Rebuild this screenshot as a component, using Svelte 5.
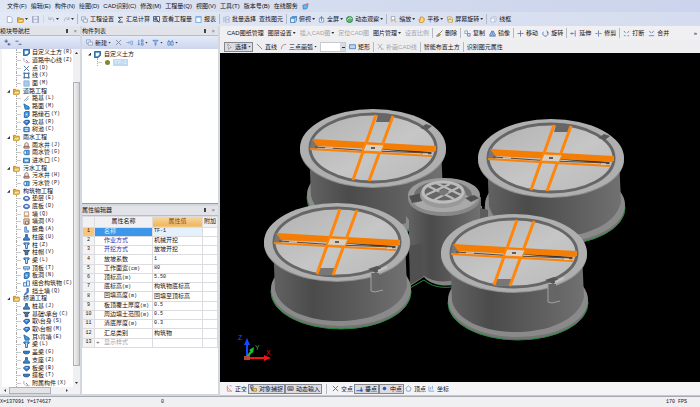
<!--
  Ventana principal del modelador: menús, barras de herramientas,
  árbol de módulos, editor de propiedades y vista 3D.
-->
<script>
  const menus = ['文件(F)', '编辑(E)', '构件(N)', '绘图(D)', 'CAD识别(C)', '修改(M)', '工程量(Q)', '视图(V)', '工具(T)', '版本号(B)', '在线服务'];

  const sep = { sep: true };

  const principal = [
    { icon: 'sheet', t: '工程设置' },
    { icon: 'sigma', t: '汇总计算' },
    { icon: 'view', t: '查看工程量' },
    { icon: 'report', t: '报表' },
    sep,
    { icon: 'batch', t: '批量选择' },
    { t: '查找图元' },
    sep,
    { icon: 'cube', t: '俯视', drop: true },
    { icon: 'full', t: '全屏', drop: true },
    { icon: 'orbit', t: '动态观察', drop: true },
    sep,
    { icon: 'zoom', t: '缩放', drop: true },
    { icon: 'hand', t: '平移', drop: true },
    { icon: 'spin', t: '屏幕旋转', drop: true },
    sep,
    { icon: 'wire', t: '线框' },
  ];

  const edicion = [
    { t: 'CAD图纸管理' },
    { t: '图层设置', drop: true },
    { t: '插入CAD图', drop: true, off: true },
    { t: '定位CAD图', off: true },
    { t: '图片管理', drop: true },
    { t: '设置比例', off: true },
    sep,
    { icon: 'brush', t: '删除' },
    sep,
    { icon: 'copy', t: '复制' },
    { icon: 'mirror', t: '镜像' },
    sep,
    { icon: 'move', t: '移动' },
    { icon: 'rotate', t: '旋转' },
    sep,
    { icon: 'extend', t: '延伸' },
    { icon: 'trim', t: '修剪' },
    sep,
    { icon: 'cut', t: '打断' },
    { icon: 'merge', t: '合并' },
  ];

  const dibujo = [
    { icon: 'pointer', t: '选择', drop: true, on: true },
    { icon: 'line', t: '直线' },
    { icon: 'arc', t: '三点画弧', drop: true },
  ];

  const dibujo2 = [
    { icon: 'rect', t: '矩形' },
    sep,
    { icon: 'patch', t: '补画CAD线', off: true },
    sep,
    { t: '智能布置土方' },
    sep,
    { t: '识别图元属性' },
  ];

  const captura = [
    { icon: 'ortho', t: '正交' },
    { icon: 'snap', t: '对象捕捉', on: true },
    { icon: 'keys', t: '动态输入', on: true },
    sep,
    { icon: 'cross', t: '交点' },
    { icon: 'perp', t: '垂点', on: true },
    { icon: 'dot', t: '中点', on: true },
    { icon: 'vertex', t: '顶点' },
    { icon: 'coord', t: '坐标' },
  ];

  const arbol = [
    ['earth', '自定义土方', 'R'],
    ['route', '道路中心线', 'Z'],
    ['cross', '点', 'D'],
    ['nodes', '线', 'X'],
    ['area', '面', 'M'],
    ['folder', '道路工程'],
    ['road', '路基', 'L'],
    ['wedge', '路面', 'M'],
    ['curb', '路缘石', 'Y'],
    ['gem', '软基', 'R'],
    ['pool', '树池', 'C'],
    ['folder', '雨水工程'],
    ['well', '雨水井', 'J'],
    ['pipe', '雨水管', 'G'],
    ['inlet', '进水口', 'C'],
    ['folder', '污水工程'],
    ['well', '污水井', 'H'],
    ['pipe', '污水管', 'P'],
    ['folder', '构筑物工程'],
    ['disc', '垫层', 'E'],
    ['disc', '底板', 'D'],
    ['wall', '墙', 'Q'],
    ['hole', '墙洞', 'K'],
    ['angle', '腋角', 'A'],
    ['seat', '柱座', 'U'],
    ['column', '柱', 'Z'],
    ['cap', '柱帽', 'V'],
    ['column', '梁', 'L'],
    ['slab', '顶板', 'T'],
    ['curb', '板洞', 'N'],
    ['group', '组合构筑物', 'C'],
    ['retain', '挡土墙', 'Q'],
    ['folder', '桥涵工程'],
    ['seat', '桩基', 'J'],
    ['cap', '基础\\承台', 'C'],
    ['gem', '取\\台身', 'S'],
    ['gem', '取\\台帽', 'M'],
    ['wedge', '耳\\背墙', 'E'],
    ['column', '梁', 'L'],
    ['beam', '盖梁', 'G'],
    ['seat', '支座', 'Z'],
    ['gem', '板梁', 'B'],
    ['beam', '搭板', 'T'],
    ['route', '附属构件', 'X'],
  ];

  const propiedades = [
    ['名称', '', 'TF-1'],
    ['作业方式', '', '机械开挖'],
    ['开挖方式', '', '放坡开挖'],
    ['放坡系数', '', '1'],
    ['工作面宽', '(cm)', '80'],
    ['顶标高', '(m)', '5.50'],
    ['底标高', '(m)', '构筑物底标高'],
    ['回填高度', '(m)', '回填至顶标高'],
    ['板顶覆土厚度', '(m)', '0.5'],
    ['周边填土范围', '(m)', '0.5'],
    ['清底厚度', '(m)', '0.3'],
    ['汇总类别', '', '构筑物'],
    ['显示样式', '', ''],
  ];

  // cada icono: lista de [trazado, relleno, contorno] en una caja de 16
  const iconos = {
    new: [['M3 1h7l4 4v10H3z', '#fff', '#a5b1c6']],
    open: [['M1 4h5l2 2h6v8H1z', '#f0b93a', '#c08a20'], ['M4 8h12l-3 6H1z', '#ffe08a', '#c99830']],
    save: [['M1 1h14v14H1z', '#b9c3d8', '#98a4bf'], ['M4 1h8v5H4zM4 9h8v6H4z', '#e8ecf5', 'none']],
    undo: [['M3 7c4-5 11-3 10 5M2 2v6h6', 'none', '#a9b4c8']],
    redo: [['M13 7C9 2 2 4 3 12M14 2v6H8', 'none', '#a9b4c8']],
    sheet: [['M1 2h9v8H1z', '#eaf2ff', '#86a5cf'], ['M5 7h10v7H5z', '#fff8d8', '#8c9fc0']],
    sigma: [['M13 3H3l5 5-5 6h10', 'none', '#333']],
    view: [['M1 1h14v11H1z', '#fff', '#444f68'], ['M4 4h5v5H4z', '#6a9be0', '#33507c'], ['M9 9l5 6', 'none', '#333']],
    report: [['M2 1h12v14H2z', '#f5faff', '#6ea0d8'], ['M2 1h12v3H2z', '#7ab5ee', 'none']],
    batch: [['M2 2v12M6 2h8v5H6zM6 9h8v5H6z', '#fff', '#9db0cc']],
    cube: [['M1 5l4-4h10v10l-4 4H1z', '#d9ecff', '#427fb8'], ['M1 5h10v10M11 5l4-4', 'none', '#427fb8'], ['M1 5l4-4h10l-4 4z', '#4f96cf', 'none']],
    full: [['M3 5h10v9H3z', '#eaf3ff', '#7b9cc8'], ['M8 1v10M5 4l3-3 3 3', 'none', '#5583bd']],
    orbit: [['M8 1a7 7 0 100 14A7 7 0 008 1', '#5cb56e', '#2e7e4a'], ['M2 10c5-8 9-6 12-3', 'none', '#d8ffe0']],
    zoom: [['M3 1h8v8H3z', '#fff', '#8ea5c8'], ['M10 9l4 6M6 9l-3 5', 'none', '#d79b3e']],
    hand: [['M4 15L2 8l3 1V3l3-1 3 1 3 2v6l-3 4z', '#ffd37c', '#c78d2b']],
    spin: [['M3 2h9l3 4v8H5z', '#fff0ba', '#c2a050'], ['M5 10c2-5 7-4 7 0', 'none', '#3b74b8']],
    wire: [['M2 5l3-3h9v9l-3 3H2zM2 5h9v9', '#f4f7fc', '#b0bfd6']],
    brush: [['M15 1L7 9', 'none', '#777'], ['M8 8c-3 0-4 3-7 6 5 1 8-1 9-4z', '#c6a46c', '#8b7a55']],
    copy: [['M2 2h6v6H2z', '#fff', '#7e9bc4'], ['M8 8h6v6H8z', '#d7e7ff', '#5f88c0']],
    mirror: [['M7 2v10H1zM9 2v10h6z', '#cfe2fb', '#4b7dbb'], ['M1 14h14', 'none', '#4b7dbb']],
    move: [['M8 1v14M1 8h14', 'none', '#6d7a92']],
    rotate: [['M3 4c-3 6 1 10 5 10s8-5 5-10M10 2l3 2-1 4', 'none', '#3d74c8']],
    extend: [['M1 8h9M12 1v14M5 5l-3 3 3 3', 'none', '#6381b4']],
    trim: [['M1 8h5M10 8h5M8 1v14', 'none', '#6381b4']],
    cut: [['M2 2l4 5M14 2l-4 5M2 13h4M10 13h4', 'none', '#6381b4']],
    merge: [['M3 2l4 5M13 2L9 7M2 13h12', 'none', '#6381b4']],
    pointer: [['M4 2l8 8-4 1-2 4z', '#fff', '#999']],
    line: [['M2 2l12 12', 'none', '#6a7f9e']],
    arc: [['M3 14C3 7 7 3 14 3', 'none', '#c07878']],
    rect: [['M1 4h14v9H1z', '#b9d7f7', '#4a7fc1']],
    patch: [['M2 2l10 12M12 2L3 13M9 14h6', 'none', '#aaa']],
    ortho: [['M3 1v13h11M3 5l9 9M8 2h5', 'none', '#d08b8b']],
    snap: [['M1 1h6v6H1z', 'none', '#5a6f94'], ['M6 8h9v6H6z', '#f2cb55', '#b08a2e'], ['M4 4v8h4', 'none', '#445']],
    keys: [['M2 4h12v8H2z', '#e8e8e8', '#555'], ['M4 7h8M4 10h8', 'none', '#555']],
    cross: [['M2 2l12 12M14 2L2 14', 'none', '#3f6ba5']],
    perp: [['M1 13h14M12 5v8', 'none', '#28509c'], ['M10 10h5v5h-5z', '#2b5ec2', 'none']],
    dot: [['M8 5a3 3 0 100 6 3 3 0 000-6', '#1f4cae', '#1f4cae']],
    vertex: [['M8 2l6 5-2 7H4L2 7z', 'none', '#7aa0cc']],
    coord: [['M2 3v11h12M6 10V5M10 10V2', 'none', '#7aa0cc']],
    earth: [['M1 1h14v9l-6 5H1z', '#3d86c0', '#215c8e'], ['M4 4h8v5l-4 3H4z', '#f4fbff', 'none']],
    route: [['M2 2v6l5 5h8', 'none', '#d08aa6'], ['M7 7l4 4', 'none', '#4d6fae']],
    nodes: [['M3 3h10v10H3z', 'none', '#30547e'], ['M1 1h4v4H1zM11 1h4v4h-4zM1 11h4v4H1zM11 11h4v4h-4z', '#3b77a8', 'none']],
    area: [['M2 2h12v12H2z', '#a9c9ee', '#88aeda']],
    road: [['M2 14L13 2M6 14l7-6', 'none', '#8a8f98']],
    wedge: [['M2 2l12 7v5H5z', '#3e97e0', '#2566a8']],
    curb: [['M3 3l4-2h7v10l-4 4H3z', '#3e9be6', '#1e5fa8'], ['M6 6h4v4H6z', '#c8e7ff', 'none']],
    gem: [['M1 7l4-4h9l1 5-7 6z', '#3a7fd0', '#1e4f97'], ['M4 7l3-2h5l-3 3z', '#b5dcff', 'none']],
    pool: [['M2 3h12v10H2z', '#5aa3e2', '#1f5a9c'], ['M4 6h8M4 10h8', 'none', '#e6f5ff']],
    well: [['M4 6c0-6 8-6 8 0v4H4z', '#f2e4df', '#9a6a60'], ['M2 10h12v4H2z', '#d6b6ac', '#8e6258']],
    pipe: [['M5 3h9v10H5z', '#5cb0ee', '#2a6daf'], ['M5 3a3 5 0 100 10 3 5 0 000-10', '#e6f6ff', '#2a6daf']],
    inlet: [['M1 3h14v10H1z', '#4fa5dc', '#276a9c'], ['M4 6h8v4H4z', '#d7f1ff', 'none']],
    disc: [['M8 3c-9 0-9 10 0 10s9-10 0-10', '#5e8fdc', '#2a4f9a'], ['M8 5c-5 0-5 4 0 4s5-4 0-4', '#e4f0ff', 'none']],
    wall: [['M3 2h10v9H3z', '#fdf3e8', '#b98c6a'], ['M2 13h12', 'none', '#b98c6a']],
    hole: [['M2 2h12v12H2z', '#f3ddc9', '#996c48'], ['M6 7h6v7H6z', '#fff', '#76543a']],
    angle: [['M4 2h4v7l5 2v3H4z', '#a6cdf5', '#4f82bd']],
    seat: [['M6 1h4v6l5 4v3H1v-3l5-4z', '#3f86c6', '#23588f']],
    column: [['M2 2h12v3l-4 2v8H6V7L2 5z', '#57a2e4', '#28629f'], ['M7 4h2v9H7z', '#d4edff', 'none']],
    cap: [['M1 3h14l-4 5v5H5V8z', '#59748e', '#304d69']],
    slab: [['M1 4h14v5H1z', '#b6d6f7', '#4676b0'], ['M5 9v4M11 9v4', 'none', '#4676b0']],
    group: [['M1 6h7v8H1zM8 2h7v12H8z', '#d9ebff', '#4b7ebd']],
    retain: [['M9 1h3v9l-6 5H3l6-7z', '#5ea1e6', '#2a62a6']],
    beam: [['M1 5h14v3l-4 3H5L1 9z', '#3b7ac2', '#1d4f8e']],
    folder: [['M1 3h5l2 2h6v9H1z', '#e8b23c', '#b98b28'], ['M4 7h12l-3 7H1z', '#ffe18d', '#c79a38']],
    del: [['M2 2l12 12M14 2L2 14', 'none', '#7b8798']],
    paste: [['M1 8h8M6 5l3 3-3 3M11 5h4v8h-4z', 'none', '#87a8d8']],
    sort: [['M4 2v12M2 11l2 3 2-3M10 2h4v4h-4zM10 9h4v5h-4z', 'none', '#5c87c8']],
    filter: [['M2 3h12L9 8v6H7V8z', '#a9c6ef', '#5c87c8']],
    find: [['M2 6h5v8H2zM9 6h5v8H9zM4 2v4M12 2v4M7 9h2', '#d1e1f8', '#5c87c8']],
    expand: [['M1 5h8M5 1v8M8 12h7M11 9v6', 'none', '#46597e']],
    collapse: [['M1 5h7M8 12h7', 'none', '#46597e']],
    service: [['M2 5l12-3-3 11-8 1z', '#6cb7ec', '#3a88c8'], ['M9 1h5v5H9z', '#ee7768', 'none']],
  };

  // centros de la tapa de cada tanque; front: los dos delanteros
  const traseros = [{ x: 373, y: 148 }, { x: 551, y: 158 }];
  const delanteros = [{ x: 337, y: 242, front: true }, { x: 514, y: 253, front: true }];
</script>

{#snippet icono(name)}
  <svg class="ico" viewBox="0 0 16 16" aria-hidden="true">
    {#each iconos[name] as [d, fill, stroke]}
      <path {d} {fill} {stroke} stroke-width="2" />
    {/each}
  </svg>
{/snippet}

{#snippet botones(items)}
  {#each items as b}
    {#if b.sep}
      <span class="sep"></span>
    {:else}
      <button class="btn" class:on={b.on} disabled={b.off}>
        {#if b.icon}{@render icono(b.icon)}{/if}
        <span>{b.t}</span>
        {#if b.drop}<i class="drop"></i>{/if}
      </button>
    {/if}
  {/each}
{/snippet}

{#snippet cabecera(titulo)}
  <header class="title">
    <h2>{titulo}</h2>
    <button class="mini" aria-label="固定"><i class="pin"></i></button>
    <button class="mini" aria-label="关闭">×</button>
  </header>
{/snippet}

{#snippet tanque(t)}
  <g transform="translate({t.x} {t.y})">
    <ellipse cx="4" cy="50" rx="70" ry="37" fill="#747474" stroke="#1f8a3b" stroke-width="1" />
    <ellipse cx="4" cy="47" rx="70" ry="37" fill="#8a8a8a" />
    <path d="M-64 0L-62 48C-52 90 60 90 70 44L68 0z" fill="url(#cuerpo)" />
    <ellipse cx="0" cy="2" rx="73" ry="38" fill="#8f8f8f" />
    <ellipse cx="0" cy="0" rx="73" ry="39" fill="#afafaf" />
    <ellipse cx="0" cy="0" rx="63" ry="34" fill="url(#tapa)" stroke="#666" stroke-width="3" />
    {#if t.front}
      <path d="M-17 26h15l-3 7h-15z" fill="#777" />
      <path d="M31 27l9-3 5 3-6 4z" fill="#555" />
      <path d="M34 31v18l8 1v-19z" fill="#666" />
      <path d="M34 31v18l4 1 8-2" fill="none" stroke="#a2a2a2" />
      <path d="M41 29l9-4" stroke="#c4c4c4" stroke-width="2" />
    {:else}
      <path d="M5-33h15l-3 7H3z" fill="#666" />
      <path d="M47-20l6-4 6 2-5 4z" fill="#5a5a5a" />
    {/if}
    <path d="M-61-9l-2 9 7 1 3-8z" fill="#777" />
    <path d="M-18-2L58 5" stroke="#333" stroke-width="2" />
    <path d="M-61-9L62-2v6L-56-2z" fill="#f47d05" />
    <path d="M-58-1L0 3 59 5" fill="none" stroke="#5b4a38" stroke-width="1" />
    <path d="M-63 1L59 8M62-2v5" fill="none" stroke="#fa8207" stroke-width="2" />
    <path d="M-48 0h8M50 6h5" stroke="#eee" stroke-width="1" />
    <path d="M3-33l-23 65M20-32L-4 33" stroke="#ff860a" stroke-width="3" />
    <path d="M-7-4L11-3 8 4-10 3z" fill="#d8cfc3" stroke="#fa8207" />
    <path d="M-2-1h4v2h-4z" fill="#665c50" />
  </g>
{/snippet}

<div class="app">
  <nav class="menu">
    {#each menus as m}
      <button class="btn">{m}</button>
    {/each}
    {@render icono('service')}
  </nav>

  <div class="bar main">
    <div class="quick">
      <button class="btn" aria-label="新建">{@render icono('new')}</button>
      <button class="btn" aria-label="打开">{@render icono('open')}<i class="drop"></i></button>
      <button class="btn" aria-label="保存">{@render icono('save')}</button>
      <span class="sep"></span>
      <button class="btn" aria-label="撤销">{@render icono('undo')}<i class="drop"></i></button>
      <button class="btn" aria-label="恢复">{@render icono('redo')}<i class="drop"></i></button>
    </div>
    <span class="sep"></span>
    {@render botones(principal)}
  </div>

  <div class="work">
    <aside class="nav">
      {@render cabecera('模块导航栏')}
      <div class="tools">
        <button class="btn" aria-label="展开">{@render icono('expand')}</button>
        <button class="btn" aria-label="折叠">{@render icono('collapse')}</button>
      </div>
      <div class="scroll">
        <ul class="tree">
          {#each arbol as [icon, name, key]}
            <li class:folder={!key}>
              <i class={key ? 'branch' : 'tri'}></i>
              {@render icono(icon)}
              <span>{name}</span>
              {#if key}<kbd>({key})</kbd>{/if}
            </li>
          {/each}
        </ul>
        <div class="vbar"><i class="up"></i><b></b><i class="drop"></i></div>
      </div>
      <div class="hbar"><i class="left"></i><b></b><i class="right"></i></div>
    </aside>

    <section class="side">
      <div class="list">
        {@render cabecera('构件列表')}
        <div class="tools">
          <button class="btn">{@render icono('sheet')}<span>新建</span><i class="drop"></i></button>
          <button class="btn" aria-label="删除">{@render icono('del')}</button>
          <button class="btn" aria-label="复制">{@render icono('paste')}</button>
          <button class="btn" aria-label="排序">{@render icono('sort')}<i class="drop"></i></button>
          <button class="btn" aria-label="过滤">{@render icono('filter')}<i class="drop"></i></button>
          <button class="btn" aria-label="查找">{@render icono('find')}<i class="drop"></i></button>
        </div>
        <ul class="items">
          <li><i class="tri"></i>{@render icono('earth')}<span>自定义土方</span></li>
          <li class="leaf"><i class="branch"></i><i class="ball"></i><span class="sel">TF-1</span></li>
        </ul>
      </div>

      <div class="props">
        {@render cabecera('属性编辑器')}
        <table>
          <colgroup><col class="c1" /><col class="c2" /><col class="c3" /><col /></colgroup>
          <thead>
            <tr><th></th><th>属性名称</th><th class="hot">属性值</th><th>附加</th></tr>
          </thead>
          <tbody>
            {#each propiedades as [name, unit, value], i}
              <tr class:current={i === 0} class:link={i === 1 || i === 2} class:dim={i === 12}>
                <th>{i + 1}</th>
                <td>{#if i === 12}<i class="plus">+</i>{/if}{name}{#if unit}<kbd>{unit}</kbd>{/if}</td>
                <td class:num={/^[\w.-]+$/.test(value)}>{value}</td>
                <td></td>
              </tr>
            {/each}
          </tbody>
        </table>
      </div>
    </section>

    <main class="stage">
      <div class="bar edit">
        {@render botones(edicion)}
        <button class="btn more" aria-label="更多">»</button>
      </div>
      <div class="bar draw">
        {@render botones(dibujo)}
        <select aria-label="画弧参数"><option></option></select>
        {@render botones(dibujo2)}
      </div>

      <div class="view">
        <svg viewBox="220 53 480 329" role="img" aria-label="三维视图">
          <defs>
            <linearGradient id="cuerpo">
              <stop offset="0" stop-color="#626262" />
              <stop offset=".3" stop-color="#4b4b4b" />
              <stop offset=".65" stop-color="#5d5d5d" />
              <stop offset="1" stop-color="#717171" />
            </linearGradient>
            <linearGradient id="tapa" x1="0" y1="0" x2="1" y2="1">
              <stop offset="0" stop-color="#b2b2b2" />
              <stop offset=".55" stop-color="#c6c6c6" />
              <stop offset="1" stop-color="#b9b9b9" />
            </linearGradient>
          </defs>

          {#each traseros as t}{@render tanque(t)}{/each}

          <!-- pozo central -->
          <path d="M410 286l14-9c10 11 28 10 40 5l18-10v-66h-70v60z" fill="#858585" />
          <path d="M410 288l14-8c10 9 26 9 40 4" fill="none" stroke="#1f8a3b" />
          <path d="M409 197v44l2 42 13-7c12 8 30 8 57-6v-73z" fill="url(#cuerpo)" />
          <path d="M480 208l8 2v18l-8 2z" fill="#5c5c5c" />
          <path d="M409 246l14-3v34l-13 8z" fill="#505050" />
          <path d="M409 228v-8l-3-4v14z" fill="#8a8a8a" />
          <ellipse cx="444" cy="199" rx="36" ry="17" fill="#888" />
          <ellipse cx="444" cy="195" rx="36" ry="17" fill="#9b9b9b" />
          <ellipse cx="443" cy="195" rx="29" ry="14" fill="#707070" />
          <path d="M415 204c8 10 48 12 60-2l-10-8-36 2z" fill="#a9a9a9" />
          <path d="M409 196l13-3v8l-10 2zM465 198l9-3 5 3-8 4z" fill="#505050" />
          <ellipse cx="443" cy="195" rx="23" ry="13" fill="#999" />
          <ellipse cx="443" cy="192" rx="20" ry="10" fill="#666" stroke="#bdbdbd" stroke-width="3" />
          <path d="M428 186l26 13M436 183l25 12M426 195l24-11M434 200l25-13" stroke="#bababa" stroke-width="2" />
          <path d="M438 192l6-3 5 3-6 4z" fill="#777" />

          {#each delanteros as t}{@render tanque(t)}{/each}

          <!-- ejes -->
          <g fill="none" stroke-width="2">
            <path d="M247 357v-14" stroke="#1747ff" />
            <path d="M244 345l3-7 3 7z" fill="#1747ff" />
            <path d="M247 357l5-6" stroke="#12c43a" />
            <path d="M249 350l5-3-1 6z" fill="#12c43a" />
            <path d="M247 358h18" stroke="#f01515" />
            <path d="M264 355l7 3-7 3z" fill="#f01515" />
            <path d="M244 356h6v4h-6z" fill="#b54632" />
          </g>
          <text x="238" y="340" fill="#2551ff">Z</text>
          <text x="255" y="350" fill="#33a852">Y</text>
          <text x="266" y="355" fill="#d81818">X</text>
        </svg>
      </div>

      <div class="bar snapbar">{@render botones(captura)}</div>
    </main>
  </div>

  <footer class="status">
    <span>X=137091 Y=174627</span>
    <span>0</span>
    <span>170 FPS</span>
  </footer>
</div>

<style>
  :global(body) {
    margin: 0;
  }

  .app {
    display: flex;
    flex-direction: column;
    height: 100vh;
    overflow: hidden;
    background: #d3d7df;
    color: #111116;
    font: 6px/8px 'Liberation Sans', 'Noto Sans CJK SC', sans-serif;
    white-space: nowrap;
  }

  button,
  select {
    margin: 0;
    padding: 0;
    border: 0;
    background: none;
    color: inherit;
    font: inherit;
  }

  ul {
    margin: 0;
    padding: 0;
    list-style: none;
  }

  kbd,
  .num {
    font-family: 'Liberation Mono', monospace;
    font-size: 5px;
  }

  .ico {
    flex: none;
    width: 7px;
    height: 7px;
  }

  .btn {
    display: flex;
    flex: none;
    align-items: center;
    gap: 2px;
  }

  .btn:disabled {
    color: #a3a3a8;
  }

  .drop,
  .up {
    flex: none;
    width: 3px;
    height: 2px;
    background: #333;
    clip-path: polygon(0 0, 100% 0, 50% 100%);
  }

  .up {
    clip-path: polygon(50% 0, 100% 100%, 0 100%);
  }

  .btn .drop {
    margin-left: -1px;
  }

  .sep {
    flex: none;
    width: 1px;
    height: 10px;
    background: #b4b9c6;
  }

  .menu {
    display: flex;
    flex: none;
    align-items: center;
    gap: 4px;
    height: 12px;
    padding-left: 7px;
    background: linear-gradient(90deg, #dfe7f4, #d1d9ee 60%, #cbd4ec);
  }

  .bar {
    display: flex;
    flex: none;
    align-items: center;
    gap: 3px;
  }

  .main {
    height: 14px;
    background: linear-gradient(90deg, #e3e9f5, #d5dcef);
  }

  .quick {
    display: flex;
    align-items: center;
    gap: 4px;
    width: 68px;
    padding-left: 6px;
  }

  .quick .sep {
    height: 8px;
    background: #d0d6e4;
  }

  .work {
    display: flex;
    flex: 1;
    gap: 2px;
    min-height: 0;
  }

  .title {
    display: flex;
    flex: none;
    align-items: center;
    gap: 5px;
    height: 9px;
    padding-right: 3px;
    background: #e2e3e8;
    border-bottom: 1px solid #b8bcc8;
  }

  .title h2 {
    flex: 1;
    margin: 0;
    font-size: 6px;
    font-weight: 400;
  }

  .mini {
    color: #777;
  }

  .pin {
    display: block;
    width: 2px;
    height: 4px;
    background: #444;
  }

  .tools {
    display: flex;
    flex: none;
    align-items: center;
    gap: 4px;
    height: 13px;
    padding-left: 4px;
    background: linear-gradient(#e4eaf8, #cdd6ee);
  }

  .nav,
  .list,
  .props {
    display: flex;
    flex-direction: column;
  }

  .nav {
    flex: none;
    width: 80px;
    margin-bottom: 2px;
    background: #f2f2f4;
  }

  .scroll {
    display: flex;
    flex: 1;
    min-height: 0;
    margin-left: 2px;
    overflow: hidden;
    background: #fff;
  }

  .tree {
    display: flex;
    flex: 1;
    flex-direction: column;
  }

  .tree li {
    display: flex;
    flex: 1;
    align-items: center;
    gap: 2px;
    min-height: 0;
    padding-left: 14px;
    line-height: 7px;
  }

  .tree .folder {
    gap: 3px;
    padding-left: 5px;
  }

  .tree kbd {
    margin-left: -1px;
  }

  .branch {
    flex: none;
    align-self: stretch;
    width: 4px;
    border-left: 1px dotted #aaa;
    background: linear-gradient(#ccc, #ccc) center / 100% 1px no-repeat;
  }

  .tri {
    flex: none;
    width: 3px;
    height: 3px;
    background: #333;
    clip-path: polygon(100% 0, 100% 100%, 0 100%);
  }

  .vbar {
    display: flex;
    flex: none;
    flex-direction: column;
    align-items: center;
    justify-content: space-between;
    width: 7px;
    padding: 3px 0;
    background: #f0f0f2;
  }

  .vbar b {
    flex: 1;
    width: 5px;
    margin: 28px 0 16px;
    border: 1px solid #aeb0b6;
    background: linear-gradient(90deg, #f2f2f2, #d2d2d6);
  }

  .hbar {
    display: flex;
    flex: none;
    align-items: center;
    gap: 3px;
    height: 7px;
    padding: 0 12px 0 4px;
  }

  .hbar b {
    width: 40px;
    height: 5px;
    margin-right: auto;
    border: 1px solid #aeb0b6;
    background: #e4e4e7;
  }

  .left,
  .right {
    width: 2px;
    height: 3px;
    background: #444;
    clip-path: polygon(0 50%, 100% 0, 100% 100%);
  }

  .right {
    clip-path: polygon(0 0, 100% 50%, 0 100%);
  }

  .side {
    display: flex;
    flex: none;
    flex-direction: column;
    gap: 2px;
    width: 136px;
    margin-bottom: 2px;
  }

  .list {
    flex: none;
    height: 48%;
    background: #fff;
    border-bottom: 1px solid #999da8;
  }

  .items {
    padding: 1px 6px;
  }

  .items li {
    display: flex;
    align-items: center;
    gap: 3px;
    height: 8px;
  }

  .items .leaf {
    padding-left: 9px;
  }

  .ball {
    width: 5px;
    height: 5px;
    border-radius: 50%;
    background: #7d8a2a;
  }

  .sel {
    padding: 0 1px;
    background: #bedaf7;
    color: #e9f4ff;
    line-height: 7px;
  }

  .props {
    flex: 1;
    min-height: 0;
    background: #fff;
  }

  table {
    width: 100%;
    table-layout: fixed;
    border-collapse: collapse;
  }

  .c1 {
    width: 12px;
  }

  .c2 {
    width: 58px;
  }

  .c3 {
    width: 50px;
  }

  th,
  td {
    box-sizing: border-box;
    height: 9px;
    padding: 0 0 0 1px;
    border: 1px solid #dcdce0;
    font-weight: 400;
    line-height: 7px;
    text-align: left;
    overflow: hidden;
  }

  tbody tr:nth-child(4n) > * {
    height: 10px;
  }

  thead th {
    height: 11px;
    padding: 0;
    background: #f1f1f4;
    text-align: center;
  }

  thead .hot {
    background: linear-gradient(#f8d9a0, #eeb45c);
    color: #8a4a10;
  }

  tbody th {
    padding: 0;
    background: #f3f3f5;
    font-family: 'Liberation Mono', monospace;
    font-size: 5px;
    text-align: center;
  }

  td:nth-child(2) {
    padding-left: 9px;
  }

  .current th {
    background: #f6c67c;
  }

  .current td:nth-child(2) {
    background: #3d97e8;
    color: #d8ecff;
  }

  .current td:nth-child(3) {
    background: #e4f1fd;
  }

  .link td:nth-child(2) {
    color: #2d2da8;
  }

  .dim td {
    color: #a5a5a5;
  }

  .dim td:nth-child(2) {
    padding-left: 1px;
  }

  .plus {
    display: inline-block;
    width: 8px;
    color: #555;
    font-style: normal;
  }

  .stage {
    display: flex;
    flex: 1;
    flex-direction: column;
    min-width: 0;
    background: #f1f1f3;
  }

  .edit {
    gap: 4px;
    height: 14px;
    padding-left: 7px;
    background: #f0f0f3;
  }

  .edit .sep {
    margin: 0 -1px;
  }

  .more {
    margin: 0 3px 0 auto;
  }

  .draw {
    height: 13px;
    padding-left: 4px;
    background: #eeeef1;
  }

  .on {
    padding: 0 1px;
    border: 1px solid #85868e;
    background: #dcdce2;
  }

  select {
    width: 26px;
    height: 10px;
    border: 1px solid #c8cad2;
    appearance: none;
    background: linear-gradient(#333, #333) 21px 4px / 3px 1px no-repeat, linear-gradient(90deg, #fff 19px, #d9dae0 19px);
  }

  .view {
    flex: 1;
    min-height: 0;
    background: #000;
  }

  .view svg {
    display: block;
    width: 100%;
    height: 100%;
  }

  .view text {
    font: 7px 'Liberation Sans', sans-serif;
  }

  .snapbar {
    gap: 2px;
    height: 13px;
    padding-left: 6px;
    border-bottom: 1px solid #c6c7cc;
    background: #f4f4f6;
  }

  .snapbar .on {
    margin: 0 -1px;
  }

  .snapbar .sep {
    margin: 0 3px;
  }

  .status {
    display: flex;
    flex: none;
    align-items: center;
    height: 10px;
    padding-right: 13px;
    border-top: 1px solid #a8aab2;
    background: #f0eff1;
    font: 5px/8px 'Liberation Mono', monospace;
  }

  .status span:first-child {
    width: 161px;
  }

  .status span:last-child {
    margin-left: auto;
  }
</style>
